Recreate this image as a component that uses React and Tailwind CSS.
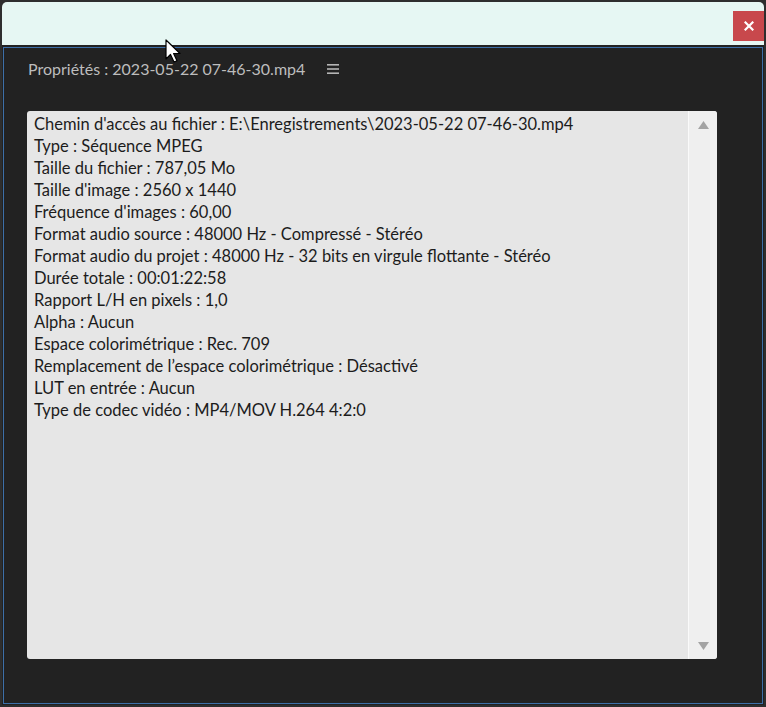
import React from "react";

const lines = [
  "Chemin d'accès au fichier : E:\\Enregistrements\\2023-05-22 07-46-30.mp4",
  "Type : Séquence MPEG",
  "Taille du fichier : 787,05 Mo",
  "Taille d'image : 2560 x 1440",
  "Fréquence d'images : 60,00",
  "Format audio source : 48000 Hz - Compressé - Stéréo",
  "Format audio du projet : 48000 Hz - 32 bits en virgule flottante - Stéréo",
  "Durée totale : 00:01:22:58",
  "Rapport L/H en pixels : 1,0",
  "Alpha : Aucun",
  "Espace colorimétrique : Rec. 709",
  "Remplacement de l’espace colorimétrique : Désactivé",
  "LUT en entrée : Aucun",
  "Type de codec vidéo : MP4/MOV H.264 4:2:0",
];

export default function App() {
  return (
    <div
      className="relative w-[766px] h-[707px] bg-[#2e2e2e] p-[2px] flex flex-col overflow-hidden"
      style={{ fontFamily: "Lato, 'Noto Sans', sans-serif" }}
    >
      {/* Title bar */}
      <div className="h-[43px] shrink-0 bg-[#e6f7f3] rounded-t-[5px] flex justify-end items-start pt-[9px]">
        <div className="w-[31px] h-[30px] bg-[#c8484c] flex items-center justify-center">
          <svg width="10" height="10" viewBox="0 0 10 10">
            <path d="M1.5 1.5 L8.5 8.5 M8.5 1.5 L1.5 8.5" stroke="#fff" strokeWidth="2.2" strokeLinecap="square" />
          </svg>
        </div>
      </div>
      {/* Panel */}
      <div className="flex-1 bg-[#222222] pt-[2px] px-[1px] pb-[1px] flex">
        <div className="flex-1 border border-[#3d6fa8] flex flex-col">
          <div className="h-[40px] mt-[1px] flex items-center pl-[24px] text-[16px] text-[#bdbdbd]">
            <span>Propriétés : 2023-05-22 07-46-30.mp4</span>
            <svg className="ml-[22px]" width="13" height="12" viewBox="0 0 13 12">
              <rect x="0" y="1" width="12" height="1.6" fill="#b5b5b5" />
              <rect x="0" y="5.2" width="12" height="1.6" fill="#b5b5b5" />
              <rect x="0" y="9.4" width="12" height="1.6" fill="#b5b5b5" />
            </svg>
          </div>
          <div className="ml-[23px] mt-[22px] w-[690px] h-[548px] bg-[#e6e6e6] rounded-[3px] flex overflow-hidden">
            <div className="flex-1 pl-[7px] pt-[2px] text-[16.5px] leading-[22px] text-[#1c1c1c]">
              {lines.map((l, i) => (
                <div key={i} className="whitespace-nowrap">{l}</div>
              ))}
            </div>
            <div className="w-[29px] bg-[#efefef] border-l border-[#fafafa] flex flex-col justify-between items-center pt-[10px] pb-[9px]">
              <svg width="11" height="8" viewBox="0 0 11 8">
                <path d="M5.5 0 L11 8 L0 8 Z" fill="#a3a3a3" />
              </svg>
              <svg width="11" height="8" viewBox="0 0 11 8">
                <path d="M0 0 L11 0 L5.5 8 Z" fill="#a3a3a3" />
              </svg>
            </div>
          </div>
        </div>
      </div>
      {/* Mouse cursor */}
      <svg className="absolute left-[165px] top-[39px]" width="18" height="26" viewBox="0 0 18 26">
        <path d="M1 1 L1 20 L5.5 15.5 L9 23 L12 21.8 L8.6 14.5 L15 14.5 Z" fill="#fff" stroke="#000" strokeWidth="1.2" strokeLinejoin="round" />
      </svg>
    </div>
  );
}
